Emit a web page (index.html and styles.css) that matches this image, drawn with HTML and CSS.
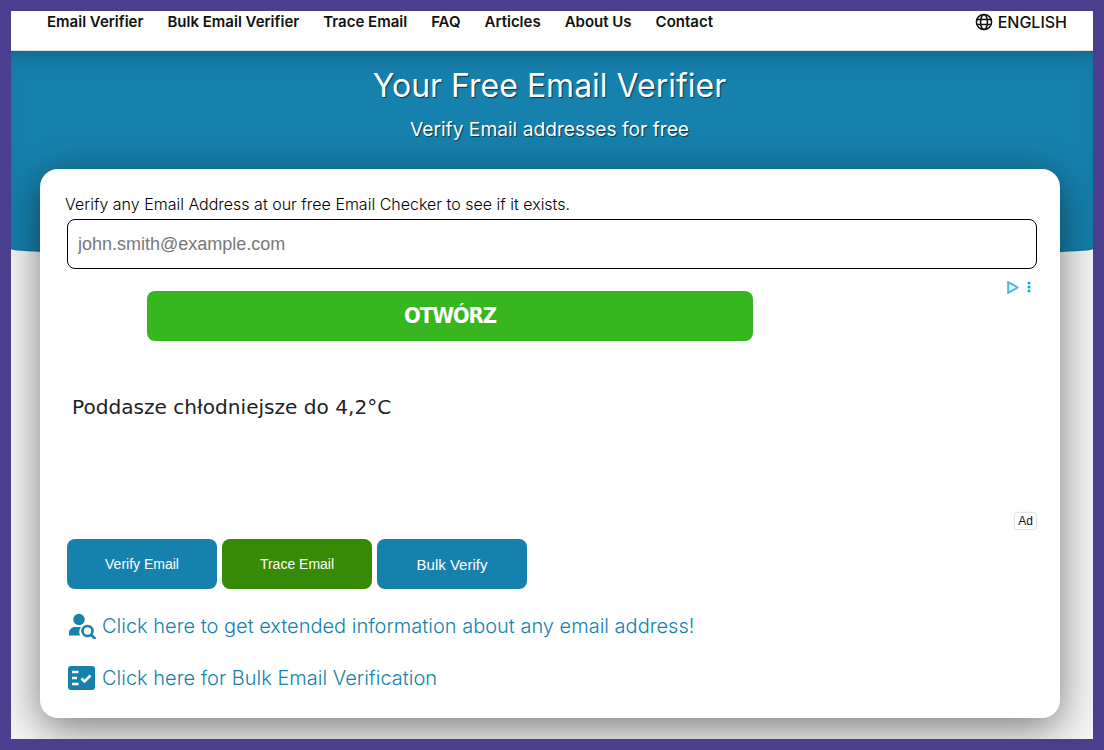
FILE: index.html
```html
<!DOCTYPE html>
<html>
<head>
    <title>Your Free Email Verifier</title>
    <link rel="stylesheet" href="styles.css">
</head>
<body>
    <div class="frame">
        <nav class="navbar">
            <div class="nav-links">
                <a href="#">Email Verifier</a>
                <a href="#">Bulk Email Verifier</a>
                <a href="#">Trace Email</a>
                <a href="#">FAQ</a>
                <a href="#">Articles</a>
                <a href="#">About Us</a>
                <a href="#">Contact</a>
            </div>
            <a href="#" class="lang">
                <svg class="globe" viewBox="0 0 18 18" width="18" height="18" fill="none" stroke="#111" stroke-width="1.5">
                    <circle cx="9" cy="9" r="7.6"/>
                    <ellipse cx="9" cy="9" rx="3.4" ry="7.6"/>
                    <path d="M1.8 6.4h14.4M1.8 11.6h14.4"/>
                </svg>
                ENGLISH
            </a>
        </nav>

        <header class="hero">
            <h1>Your Free Email Verifier</h1>
            <p>Verify Email addresses for free</p>
        </header>

        <main class="card">
            <label class="intro" for="email">Verify any Email Address at our free Email Checker to see if it exists.</label>
            <input class="email-input" id="email" type="text" placeholder="john.smith@example.com">

            <div class="ad">
                <div class="ad-icons">
                    <svg viewBox="0 0 12 13" width="12" height="13" fill="none" stroke="#4db4ee" stroke-width="2">
                        <path d="M1.2 1.2v10.600L10.600 6.500z"/>
                    </svg>
                    <svg viewBox="0 0 4 12" width="4" height="12" fill="#00aecd">
                        <circle cx="2" cy="2" r="1.5"/>
                        <circle cx="2" cy="6" r="1.5"/>
                        <circle cx="2" cy="10" r="1.5"/>
                    </svg>
                </div>
                <a href="#" class="ad-button">OTWÓRZ</a>
                <div class="ad-title">Poddasze chłodniejsze do 4,2°C</div>
                <span class="ad-badge">Ad</span>
            </div>

            <div class="actions">
                <button type="button">Verify Email</button>
                <button type="button" class="active">Trace Email</button>
                <button type="button" class="bulk">Bulk Verify</button>
            </div>

            <a href="#" class="info-link">
                <svg viewBox="0 0 28 26" width="28" height="26" fill="#1681ad">
                    <circle cx="11" cy="6.500" r="5.700"/>
                    <path d="M1 22.500v-3c0-3 3-5.500 6-5.500h6c-2 2.500-2.400 6-.8 8.500z"/>
                    <circle cx="19.500" cy="18" r="5" fill="none" stroke="#1681ad" stroke-width="2.600"/>
                    <path d="M23 21.800L27.500 26" fill="none" stroke="#1681ad" stroke-width="2.600"/>
                </svg>
                Click here to get extended information about any email address!
            </a>
            <a href="#" class="info-link second">
                <svg viewBox="0 0 27 24" width="27" height="24">
                    <rect width="27" height="24" rx="3" fill="#1681ad"/>
                    <path d="M4 6h6.500M4 12h5M4 18h6.500" stroke="#fff" stroke-width="2.400" fill="none"/>
                    <path d="M13.500 12.500l3 3 6-6" stroke="#fff" stroke-width="2.600" fill="none"/>
                </svg>
                Click here for Bulk Email Verification
            </a>
        </main>
    </div>
</body>
</html>
```

FILE: styles.css
```css
* {
    box-sizing: border-box;
}

html, body {
    margin: 0;
    height: 100%;
}

body {
    font-family: 'Inter', sans-serif;
    background-color: #f5f5f5;
    color: #111;
    overflow: hidden;
}

.frame {
    height: 750px;
    border: 11px solid #4a3f8f;
    overflow: hidden;
    background: #f5f5f5;
}

a {
    text-decoration: none;
}

.navbar {
    height: 40px;
    padding: 0 26px 18px 36px;
    display: flex;
    justify-content: space-between;
    align-items: center;
    background: white;
    border-bottom: 1px solid #dcdcdc;
}

.nav-links {
    display: flex;
    gap: 24px;
}

.nav-links a {
    color: #111;
    font-size: 15px;
    font-weight: 600;
}

.lang {
    display: flex;
    align-items: center;
    gap: 5px;
    color: #111;
    font-size: 16px;
    font-weight: 500;
}

.hero {
    height: 207px;
    padding: 13px 5px 0 0;
    text-align: center;
    color: white;
    background: #1681ad;
    border-radius: 0 0 50% 50% / 0 0 9px 9px;
    box-shadow: inset 0 14px 24px -12px rgba(0,0,0,0.25);
    text-shadow: 1px 1px 1px rgba(0,0,0,0.6);
}

.hero h1 {
    margin: 0;
    font-size: 32px;
    font-weight: 400;
    line-height: 44px;
}

.hero p {
    margin: 9px 0 0;
    font-size: 19.2px;
    line-height: 24px;
}

.card {
    margin: -89px 33px 0 29px;
    height: 549px;
    padding: 25px 23px 0 25px;
    position: relative;
    background: white;
    border-radius: 18px;
    box-shadow: 0 10px 40px rgba(0,0,0,0.5);
}

.intro {
    display: block;
    color: #000;
    font-size: 16px;
    font-weight: 300;
    line-height: 20px;
}

.email-input {
    display: block;
    width: 970px;
    height: 50px;
    margin: 5px 0 0 2px;
    padding: 0 10px;
    border: 1px solid #000;
    border-radius: 8px;
    font-family: 'Liberation Sans', sans-serif;
    font-size: 18px;
}

.email-input::placeholder {
    color: #777;
}

.ad {
    position: relative;
    width: 970px;
    height: 260px;
    margin: 0 0 0 2px;
    padding-top: 22px;
}

.ad-icons {
    position: absolute;
    top: 12px;
    right: 6px;
    display: flex;
    gap: 8px;
}

.ad-button {
    display: block;
    width: 606px;
    height: 50px;
    margin-left: 80px;
    background: #38b61f;
    border-radius: 8px;
    color: white;
    font-family: 'DejaVu Sans Condensed', 'DejaVu Sans', sans-serif;
    font-size: 22px;
    font-weight: 700;
    letter-spacing: -1.1px;
    line-height: 50px;
    text-align: center;
}

.ad-title {
    margin: 54px 0 0 5px;
    color: #222;
    font-family: 'DejaVu Sans', sans-serif;
    font-size: 20.1px;
    line-height: 24px;
}

.ad-badge {
    position: absolute;
    right: 1px;
    bottom: 0;
    height: 16px;
    padding: 0 3px;
    background: white;
    border-radius: 2px;
    box-shadow: 0 0 2px rgba(0,0,0,0.4);
    font-family: 'Liberation Sans', sans-serif;
    font-size: 12px;
    line-height: 16px;
}

.actions {
    display: flex;
    gap: 5px;
    margin: 10px 0 0 2px;
}

.actions button {
    width: 150px;
    height: 50px;
    background: #1681ad;
    border: none;
    border-radius: 8px;
    color: white;
    font-family: 'Liberation Sans', sans-serif;
    font-size: 14px;
    cursor: pointer;
}

.actions button.active {
    background: #368a05;
}

.actions button.bulk {
    font-size: 15px;
}

.info-link {
    display: flex;
    align-items: center;
    gap: 6px;
    height: 28px;
    margin: 23px 0 0 3px;
    color: #1681ad;
    font-size: 20px;
    font-weight: 300;
}

.info-link.second {
    gap: 7px;
    margin-top: 24px;
}
```
